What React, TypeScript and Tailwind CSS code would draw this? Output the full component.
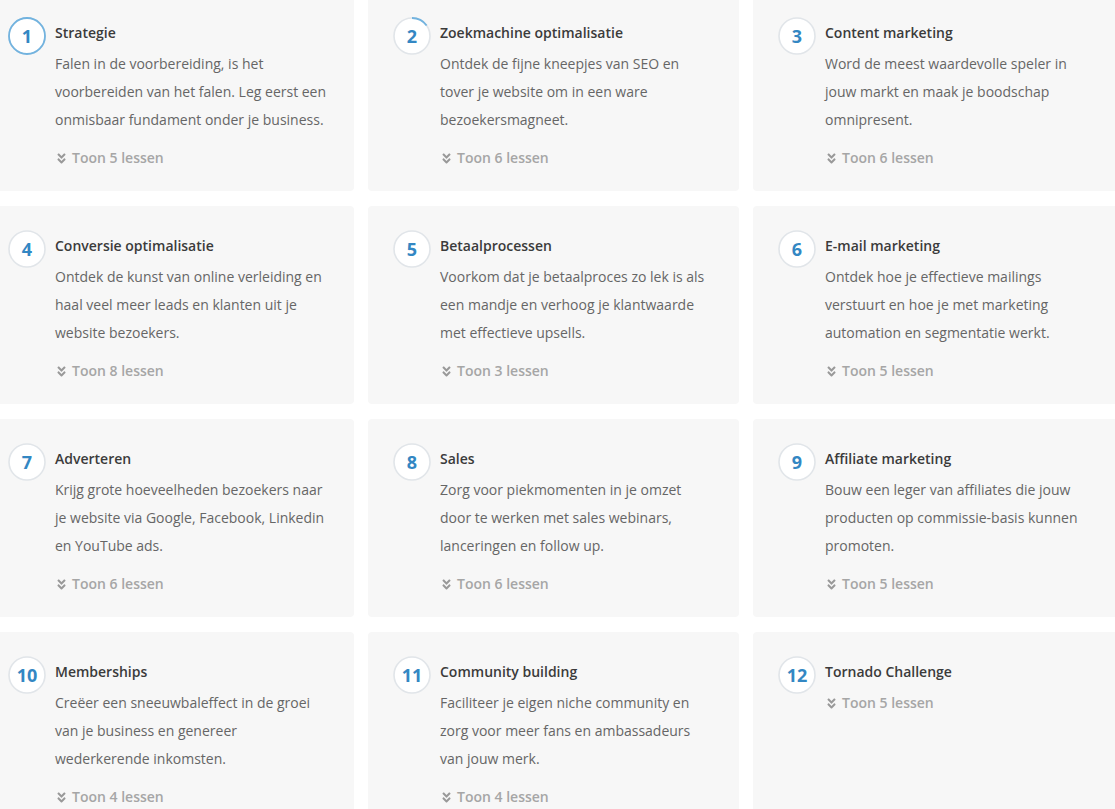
import { FaAngleDoubleDown } from "react-icons/fa";

type Module = {
  title: string;
  text?: string;
  lessons: number;
  progress: number;
};

const modules: Module[] = [
  { title: "Strategie", text: "Falen in de voorbereiding, is het voorbereiden van het falen. Leg eerst een onmisbaar fundament onder je business.", lessons: 5, progress: 1 },
  { title: "Zoekmachine optimalisatie", text: "Ontdek de fijne kneepjes van SEO en tover je website om in een ware bezoekersmagneet.", lessons: 6, progress: 0.15 },
  { title: "Content marketing", text: "Word de meest waardevolle speler in jouw markt en maak je boodschap omnipresent.", lessons: 6, progress: 0 },
  { title: "Conversie optimalisatie", text: "Ontdek de kunst van online verleiding en haal veel meer leads en klanten uit je website bezoekers.", lessons: 8, progress: 0 },
  { title: "Betaalprocessen", text: "Voorkom dat je betaalproces zo lek is als een mandje en verhoog je klantwaarde met effectieve upsells.", lessons: 3, progress: 0 },
  { title: "E-mail marketing", text: "Ontdek hoe je effectieve mailings verstuurt en hoe je met marketing automation en segmentatie werkt.", lessons: 5, progress: 0 },
  { title: "Adverteren", text: "Krijg grote hoeveelheden bezoekers naar je website via Google, Facebook, Linkedin en YouTube ads.", lessons: 6, progress: 0 },
  { title: "Sales", text: "Zorg voor piekmomenten in je omzet door te werken met sales webinars, lanceringen en follow up.", lessons: 6, progress: 0 },
  { title: "Affiliate marketing", text: "Bouw een leger van affiliates die jouw producten op commissie-basis kunnen promoten.", lessons: 5, progress: 0 },
  { title: "Memberships", text: "Creëer een sneeuwbaleffect in de groei van je business en genereer wederkerende inkomsten.", lessons: 4, progress: 0 },
  { title: "Community building", text: "Faciliteer je eigen niche community en zorg voor meer fans en ambassadeurs van jouw merk.", lessons: 4, progress: 0 },
  { title: "Tornado Challenge", lessons: 5, progress: 0 },
];

function ProgressRing({ n, progress }: { n: number; progress: number }) {
  const c = 2 * Math.PI * 18;
  return (
    <div className="relative mt-[24px] h-[38px] w-[38px] shrink-0">
      <svg width="38" height="38" viewBox="0 0 38 38" className="absolute inset-0">
        <circle cx="19" cy="19" r="18" fill="#ffffff" stroke="#e1e5e9" strokeWidth="1.6" />
        {progress > 0 && (
          <circle
            cx="19"
            cy="19"
            r="18"
            fill="none"
            stroke="#72b3df"
            strokeWidth="1.8"
            strokeDasharray={`${c * progress} ${c}`}
            transform="rotate(-90 19 19)"
          />
        )}
      </svg>
      <span className="relative flex h-full items-center justify-center text-[18px] font-bold text-[#3387c3]">
        {n}
      </span>
    </div>
  );
}

function ModuleCard({ mod, n }: { mod: Module; n: number }) {
  return (
    <div className="flex h-[198px] rounded-[4px] bg-[#f7f7f7] pl-[25px]">
      <ProgressRing n={n} progress={mod.progress} />
      <div className="ml-[9px] w-[275px] pt-[29px]">
        <div className="text-[14px] font-semibold leading-[21px] text-[#3b3b3b]">{mod.title}</div>
        {mod.text && (
          <p className="mt-[7px] text-[14px] leading-[28px] text-[#666]">{mod.text}</p>
        )}
        <div
          className={`${mod.text ? "mt-[14px]" : "mt-[11px]"} flex items-center gap-[4px] text-[14px] font-semibold leading-[20px] text-[#a6a6a6]`}
        >
          <FaAngleDoubleDown className="text-[13px] text-[#999]" />
          <span>Toon {mod.lessons} lessen</span>
        </div>
      </div>
    </div>
  );
}

export default function App() {
  return (
    <div className="h-[809px] w-[1115px] overflow-hidden bg-white font-['Open_Sans',sans-serif]">
      <div className="-mt-[7px] -ml-[17px] grid grid-cols-[repeat(3,371px)] gap-x-[14px] gap-y-[15px]">
        {modules.map((m, i) => (
          <ModuleCard key={m.title} mod={m} n={i + 1} />
        ))}
      </div>
    </div>
  );
}
